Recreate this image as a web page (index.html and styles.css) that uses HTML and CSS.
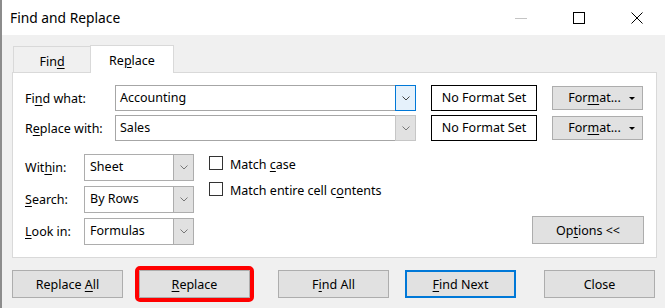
FILE: index.html
```html
<!DOCTYPE html>
<html lang="en">
<head>
    <meta charset="UTF-8">
    <title>Find and Replace</title>
    <link rel="stylesheet" href="styles.css">
</head>
<body>
    <div class="window">
        <div class="titlebar">
            <span class="title">Find and Replace</span>
            <div class="controls">
                <span class="ctl">
                    <svg width="12" height="12" viewBox="0 0 12 12"><path d="M0 6.5 H12" stroke="#c4c4c4" stroke-width="1"/></svg>
                </span>
                <span class="ctl">
                    <svg width="12" height="12" viewBox="0 0 12 12"><rect x="0.5" y="0.5" width="11" height="11" fill="none" stroke="#000" stroke-width="1"/></svg>
                </span>
                <span class="ctl">
                    <svg width="12" height="12" viewBox="0 0 12 12"><path d="M0.5 0.5 L11.5 11.5 M11.5 0.5 L0.5 11.5" stroke="#000" stroke-width="1"/></svg>
                </span>
            </div>
        </div>

        <div class="content">
            <div class="tabs">
                <div class="tab">Fin<u>d</u></div>
                <div class="tab active">Re<u>p</u>lace</div>
            </div>

            <div class="panel">
                <div class="find-grid">
                    <label>Fi<u>n</u>d what:</label>
                    <div class="combo">
                        <span class="value">Accounting</span>
                        <span class="drop hot">
                            <svg width="8" height="5" viewBox="0 0 8 5"><path d="M0.5 0.5 L4 4 L7.5 0.5" fill="none" stroke="#444"/></svg>
                        </span>
                    </div>
                    <div class="format-box">No Format Set</div>
                    <div class="btn format">For<u>m</u>at...<span class="caret"></span></div>

                    <label>R<u>e</u>place with:</label>
                    <div class="combo">
                        <span class="value">Sales</span>
                        <span class="drop">
                            <svg width="8" height="5" viewBox="0 0 8 5"><path d="M0.5 0.5 L4 4 L7.5 0.5" fill="none" stroke="#777"/></svg>
                        </span>
                    </div>
                    <div class="format-box">No Format Set</div>
                    <div class="btn format">For<u>m</u>at...<span class="caret"></span></div>
                </div>

                <div class="lower">
                    <div class="scope">
                        <label>Wit<u>h</u>in:</label>
                        <div class="select">
                            <span class="value">Sheet</span>
                            <span class="drop">
                                <svg width="8" height="5" viewBox="0 0 8 5"><path d="M0.5 0.5 L4 4 L7.5 0.5" fill="none" stroke="#777"/></svg>
                            </span>
                        </div>
                        <label><u>S</u>earch:</label>
                        <div class="select">
                            <span class="value">By Rows</span>
                            <span class="drop">
                                <svg width="8" height="5" viewBox="0 0 8 5"><path d="M0.5 0.5 L4 4 L7.5 0.5" fill="none" stroke="#777"/></svg>
                            </span>
                        </div>
                        <label><u>L</u>ook in:</label>
                        <div class="select">
                            <span class="value">Formulas</span>
                            <span class="drop">
                                <svg width="8" height="5" viewBox="0 0 8 5"><path d="M0.5 0.5 L4 4 L7.5 0.5" fill="none" stroke="#777"/></svg>
                            </span>
                        </div>
                    </div>

                    <div class="checks">
                        <div class="check"><span class="box"></span><span>Match <u>c</u>ase</span></div>
                        <div class="check"><span class="box"></span><span>Match entire cell c<u>o</u>ntents</span></div>
                    </div>

                    <div class="btn options">Op<u>t</u>ions &lt;&lt;</div>
                </div>
            </div>

            <div class="actions">
                <div class="btn">Replace <u>A</u>ll</div>
                <div class="btn marked"><u>R</u>eplace</div>
                <div class="btn group">F<u>i</u>nd All</div>
                <div class="btn default"><u>F</u>ind Next</div>
                <div class="btn group">Close</div>
            </div>
        </div>
    </div>
</body>
</html>
```

FILE: styles.css
```css
body {
    margin: 0;
    font-family: "Noto Sans", "Open Sans", sans-serif;
    font-size: 12.5px;
    color: #000;
}
u {
    text-underline-offset: 2px;
}
label {
    white-space: nowrap;
}
.window {
    width: 665px;
    height: 308px;
    box-sizing: border-box;
    border-left: 2px solid #8c8c8c;
    background-color: #f0f0f0;
    overflow: hidden;
}
.titlebar {
    height: 35px;
    background-color: #fff;
    display: flex;
    align-items: center;
}
.title {
    padding-left: 8px;
    font-size: 13.8px;
    padding-bottom: 1px;
}
.controls {
    margin-left: auto;
    display: flex;
    margin-right: -1px;
}
.ctl {
    width: 58px;
    height: 35px;
    display: flex;
    align-items: center;
    justify-content: center;
}
.content {
    padding: 10px 0 0 10px;
}
.tabs {
    display: flex;
    align-items: flex-end;
    margin-left: 1px;
}
.tab {
    box-sizing: border-box;
    width: 77px;
    height: 26px;
    border: 1px solid #d9d9d9;
    border-right: none;
    border-bottom: none;
    text-align: center;
    line-height: 29px;
}
.tab.active {
    width: 84px;
    height: 28px;
    background-color: #fff;
    border-right: 1px solid #d9d9d9;
    margin-bottom: -1px;
    position: relative;
    line-height: 30px;
}
.panel {
    box-sizing: border-box;
    width: 645px;
    height: 186px;
    border: 1px solid #d9d9d9;
    background-color: #fff;
    padding: 12px 0 0 12px;
}
.find-grid {
    display: grid;
    grid-template-columns: 75px 301px 106px 91px;
    grid-template-rows: 26px 26px;
    column-gap: 15px;
    row-gap: 4px;
    align-items: center;
}
.combo, .select {
    display: flex;
    box-sizing: border-box;
    height: 26px;
    border: 1px solid #a6a6a6;
    background-color: #fff;
}
.value {
    flex: 1;
    padding-left: 4px;
    line-height: 23px;
}
.drop {
    width: 21px;
    box-sizing: border-box;
    display: flex;
    align-items: center;
    justify-content: center;
    background-color: #e1e1e1;
    border: 1px solid #c6c6c6;
    margin: -1px -1px -1px 0;
}
.drop.hot {
    background-color: #e5f1fb;
    border-color: #0078d7;
}
.format-box {
    box-sizing: border-box;
    height: 26px;
    border: 1px solid #000;
    text-align: center;
    line-height: 23px;
}
.btn {
    box-sizing: border-box;
    width: 111px;
    height: 28px;
    border: 1px solid #adadad;
    background-color: #e1e1e1;
    text-align: center;
    line-height: 28px;
}
.btn.format {
    width: 91px;
    height: 24px;
    line-height: 21px;
    position: relative;
    padding-right: 6px;
}
.caret {
    position: absolute;
    right: 7px;
    top: 10px;
    border-left: 3px solid transparent;
    border-right: 3px solid transparent;
    border-top: 3px solid #000;
}
.lower {
    display: flex;
    margin-top: 13px;
}
.scope {
    display: grid;
    grid-template-columns: 59px 110px;
    grid-template-rows: 27px 27px 27px;
    row-gap: 5px;
    align-items: center;
}
.select {
    height: 27px;
    border-color: #adadad;
}
.select .value {
    padding-left: 5px;
}
.select .drop {
    border-color: #adadad;
}
.checks {
    margin-left: 15px;
    padding-top: 2px;
    display: flex;
    flex-direction: column;
    gap: 12px;
}
.check {
    display: flex;
    align-items: center;
    gap: 7px;
    height: 14px;
}
.check span:last-child {
    padding-top: 2px;
}
.box {
    width: 12px;
    height: 12px;
    border: 1px solid #333;
    background-color: #fff;
}
.btn.options {
    margin-left: auto;
    align-self: flex-end;
    width: 112px;
    margin-right: 12px;
    margin-bottom: 1px;
}
.actions {
    display: flex;
    gap: 16px;
    margin-top: 12px;
}
.btn.group {
    margin-left: 12px;
}
.btn.marked {
    outline: 4px solid #ff0000;
    border-radius: 1px;
}
.btn.default {
    border: 2px solid #0078d7;
    line-height: 26px;
}
```
